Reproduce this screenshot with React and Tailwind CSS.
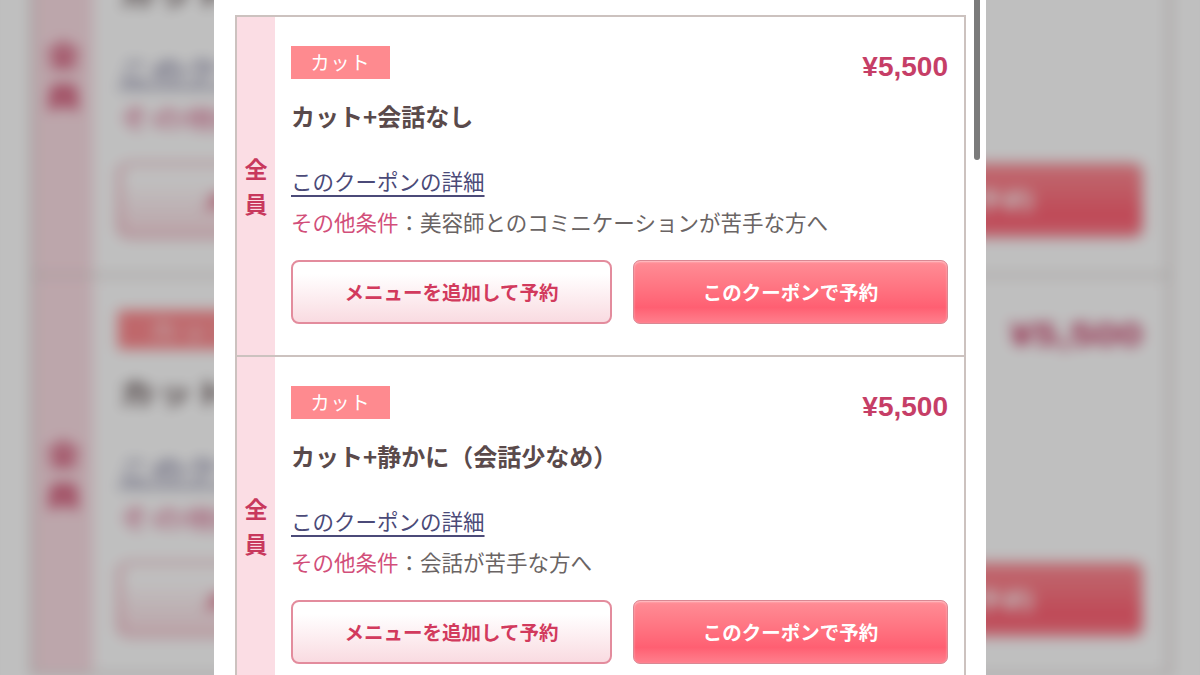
const coupons = [
  {
    id: 1,
    tag: 'カット',
    price: '¥5,500',
    title: 'カット+会話なし',
    note: '美容師とのコミニケーションが苦手な方へ',
  },
  {
    id: 2,
    tag: 'カット',
    price: '¥5,500',
    title: 'カット+静かに（会話少なめ）',
    note: '会話が苦手な方へ',
  },
]

const jp = "font-['Noto_Sans_CJK_JP',sans-serif]"

function CouponCard({ coupon, first }) {
  return (
    <div className={`flex ${first ? '' : 'border-t-2 border-[#ccc2bf]'}`}>
      <div className="flex w-[38px] shrink-0 items-center justify-center bg-[#fbdde4]">
        <div className="flex flex-col items-center text-[23px] font-bold leading-[35px] text-[#c8385d]">
          <span>全</span>
          <span>員</span>
        </div>
      </div>
      <div className="flex-1 px-[16px] pt-[29px] pb-[31px]">
        <div className="flex h-[33px] items-start justify-between">
          <span className="flex h-[33px] w-[99px] items-center justify-center bg-[#fe8a8f] text-[19px] font-normal tracking-[1px] text-white">
            {coupon.tag}
          </span>
          <span className="mt-[4px] font-['Liberation_Sans',sans-serif] text-[28px] font-bold leading-[33px] text-[#c63e67]">
            {coupon.price}
          </span>
        </div>
        <h2 className="mt-[21px] text-[24px] font-bold leading-[32px] text-[#5a4a4b]">
          {coupon.title}
        </h2>
        <a href="#" className="mt-[34px] block w-fit text-[21.5px] leading-[30px] text-[#4b4a78] underline decoration-[1.5px] underline-offset-[5px]">
          このクーポンの詳細
        </a>
        <p className="mt-[11px] text-[21.5px] leading-[30px] text-[#6a6464]">
          <span className="text-[#d24f7a]">その他条件</span>：{coupon.note}
        </p>
        <div className="mt-[23px] flex gap-[21px]">
          <button className="flex h-[64px] w-[321px] items-center justify-center rounded-[8px] border-2 border-[#e38c9d] bg-gradient-to-b from-white from-20% to-[#f9dbe1] text-[19.5px] font-bold text-[#d23a5d]">
            メニューを追加して予約
          </button>
          <button className="flex h-[64px] flex-1 items-center justify-center rounded-[7px] border border-[#d98893] bg-gradient-to-b from-[#ff8d96] via-[#ff5f72] via-75% to-[#ff7f8d] text-[19.5px] font-bold text-white shadow-[inset_0_1px_2px_rgba(255,255,255,0.5)]">
            このクーポンで予約
          </button>
        </div>
      </div>
    </div>
  )
}

function CouponPanel() {
  return (
    <div className={`w-[772px] bg-white px-[20px] pt-[15px] pb-[40px] ${jp}`}>
      <div className="ml-px border-2 border-[#ccc2bf]">
        {coupons.map((coupon, i) => (
          <CouponCard key={coupon.id} coupon={coupon} first={i === 0} />
        ))}
      </div>
    </div>
  )
}

export default function App() {
  return (
    <div className="relative h-[675px] w-[1200px] overflow-hidden bg-[#bdbdbd]">
      {/* blurred, stretched copy behind the screenshot */}
      <div aria-hidden="true" className="absolute inset-0 blur-[7px] brightness-75">
        <div className="mx-auto w-[772px] origin-[50%_337.5px] scale-x-[1.56] scale-y-[1.174] -translate-y-[84px]">
          <CouponPanel />
        </div>
      </div>

      <div className="relative mx-auto h-full w-[772px] overflow-hidden bg-white">
        <CouponPanel />
        <div className="absolute top-0 left-[760px] h-[160px] w-[6px] rounded-b-full bg-[#7b7b7b]" />
      </div>
    </div>
  )
}
